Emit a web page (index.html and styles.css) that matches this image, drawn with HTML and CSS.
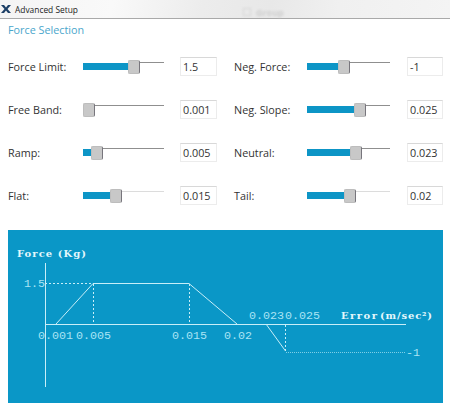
FILE: index.html
```html
<!DOCTYPE html>
<html lang="en">
<head>
  <meta charset="UTF-8">
  <title>Advanced Setup</title>
  <link rel="stylesheet" href="styles.css">
</head>
<body>
  <div class="titlebar">
    <svg class="app-icon" width="10" height="10" viewBox="0 0 10 10"><path d="M0 1h3l2 2.600 2-2.600h3l-3.500 4 3.500 4h-3l-2-2.600-2 2.600h-3l3.500-4z" fill="#1c3f66"/></svg>
    <span class="title">Advanced Setup</span>
    <span class="ghost"><i></i>Group</span>
  </div>
  <h1 class="section">Force Selection</h1>
  <div class="grid">
    <div class="row"><label>Force Limit:</label><div class="slider"><div class="fill" style="width: 52px"></div></div><div class="value">1.5</div></div>
    <div class="row right"><label>Neg. Force:</label><div class="slider"><div class="fill" style="width: 38px"></div></div><div class="value">-1</div></div>
    <div class="row"><label>Free Band:</label><div class="slider"><div class="fill" style="width: 7px"></div></div><div class="value">0.001</div></div>
    <div class="row right"><label>Neg. Slope:</label><div class="slider"><div class="fill" style="width: 54px"></div></div><div class="value">0.025</div></div>
    <div class="row"><label>Ramp:</label><div class="slider"><div class="fill" style="width: 15px"></div></div><div class="value">0.005</div></div>
    <div class="row right"><label>Neutral:</label><div class="slider"><div class="fill" style="width: 50px"></div></div><div class="value">0.023</div></div>
    <div class="row"><label>Flat:</label><div class="slider faint"><div class="fill" style="width: 34px"></div></div><div class="value">0.015</div></div>
    <div class="row right"><label>Tail:</label><div class="slider faint"><div class="fill" style="width: 44px"></div></div><div class="value">0.02</div></div>
  </div>
  <div class="chart">
    <svg width="435" height="173" viewBox="8 230 435 173">
      <g class="solid">
        <path d="M45.500 263V387"/>
        <path d="M45 324.500H406"/>
        <path d="M56 324L93 283.500H189L237 324"/>
        <path d="M266 324L285.500 351"/>
      </g>
      <g class="dashed">
        <path d="M45 283.500H93"/>
        <path d="M93.500 284V324"/>
        <path d="M189.500 284V324"/>
        <path d="M285.500 325V351"/>
      </g>
      <path class="dotted" d="M286 352.500H406"/>
      <text class="bold" x="17" y="257" textLength="69">Force (Kg)</text>
      <text x="24" y="287">1.5</text>
      <text x="38" y="339">0.001</text>
      <text x="76" y="339">0.005</text>
      <text x="172" y="339">0.015</text>
      <text x="224" y="339">0.02</text>
      <text x="249" y="319">0.023</text>
      <text x="285" y="319">0.025</text>
      <text class="bold" x="341" y="319" textLength="36">Error</text>
      <text class="bold" x="380" y="319" textLength="52">(m/sec²)</text>
      <text x="406" y="356">-1</text>
    </svg>
  </div>
</body>
</html>
```
FILE: styles.css
```css
* {
  box-sizing: border-box;
  margin: 0;
  padding: 0;
}
body {
  width: 450px;
  height: 407px;
  overflow: hidden;
  background: #fff;
  font-family: "Open Sans", "Liberation Sans", sans-serif;
  color: #333;
}
.titlebar {
  height: 19px;
  display: flex;
  align-items: center;
  padding-left: 1px;
  gap: 4px;
  border-bottom: 1px solid #a9a9a9;
  background: linear-gradient(100deg, #f4f4f4 0%, #f9f9f9 25%, #ececec 45%, #e8e8e8 60%, #f0f0f0 75%, #f4f4f4 100%);
}
.title {
  font-size: 8.4px;
  color: #222;
}
.ghost {
  margin: 6px 0 0 161px;
  display: flex;
  align-items: center;
  gap: 5px;
  font-size: 9px;
  font-weight: bold;
  color: #cfcfcf;
  filter: blur(0.8px);
}
.ghost i {
  width: 8px;
  height: 8px;
  border: 1px solid #d8d8d8;
}
.section {
  font-size: 10.8px;
  font-weight: normal;
  color: #4aa6cc;
  padding: 3px 0 0 8px;
  height: 26px;
}
.grid {
  display: grid;
  grid-template-columns: 225px 225px;
  grid-auto-rows: 43px;
  height: 185px;
}
.row {
  display: flex;
  align-items: center;
  padding-left: 8px;
  font-size: 10.8px;
}
.row.right {
  padding-left: 9px;
}
.row label {
  width: 75px;
}
.right label {
  width: 73px;
}
.slider {
  position: relative;
  width: 81px;
  height: 12px;
  margin-top: -1px;
}
.right .slider {
  width: 83px;
}
.slider::before {
  content: "";
  position: absolute;
  left: 0;
  right: 0;
  top: 2px;
  height: 1px;
  background: #8f8f8f;
}
.slider.faint::before {
  background: #dcdcdc;
}
.fill {
  position: relative;
  height: 7px;
  top: 3px;
  background: #0d95c6;
  box-shadow: 0 -1px 0 #fff;
}
.fill::after {
  content: "";
  position: absolute;
  right: -5px;
  top: -3px;
  width: 10px;
  height: 12px;
  border: 1px solid #bdbdbd;
  border-right-color: #77757c;
  border-radius: 2px;
  background: #c8c8c8;
}
.value {
  width: 37px;
  height: 19px;
  margin-left: 16px;
  padding-left: 2px;
  border: 1px solid #ececec;
  border-top-color: #d8d8d8;
  font-size: 10.8px;
  line-height: 17px;
}
.right .value {
  width: 36px;
  margin-left: 17px;
}
.chart {
  margin-left: 8px;
  width: 435px;
  height: 173px;
  background: #0a97c7;
}
.chart svg {
  display: block;
}
.chart path {
  fill: none;
  stroke: #c8eef8;
  stroke-width: 1;
}
.chart .dashed path {
  stroke-dasharray: 2 2;
}
.chart .dotted {
  stroke-dasharray: 1 1;
  stroke: #7fcfe6;
}
.chart text {
  font-family: "Liberation Mono", monospace;
  font-size: 11.7px;
  fill: #a9e4f4;
}
.chart .bold {
  font-family: "DejaVu Serif", serif;
  font-size: 10px;
  font-weight: bold;
  fill: #e4f7fc;
}
```
